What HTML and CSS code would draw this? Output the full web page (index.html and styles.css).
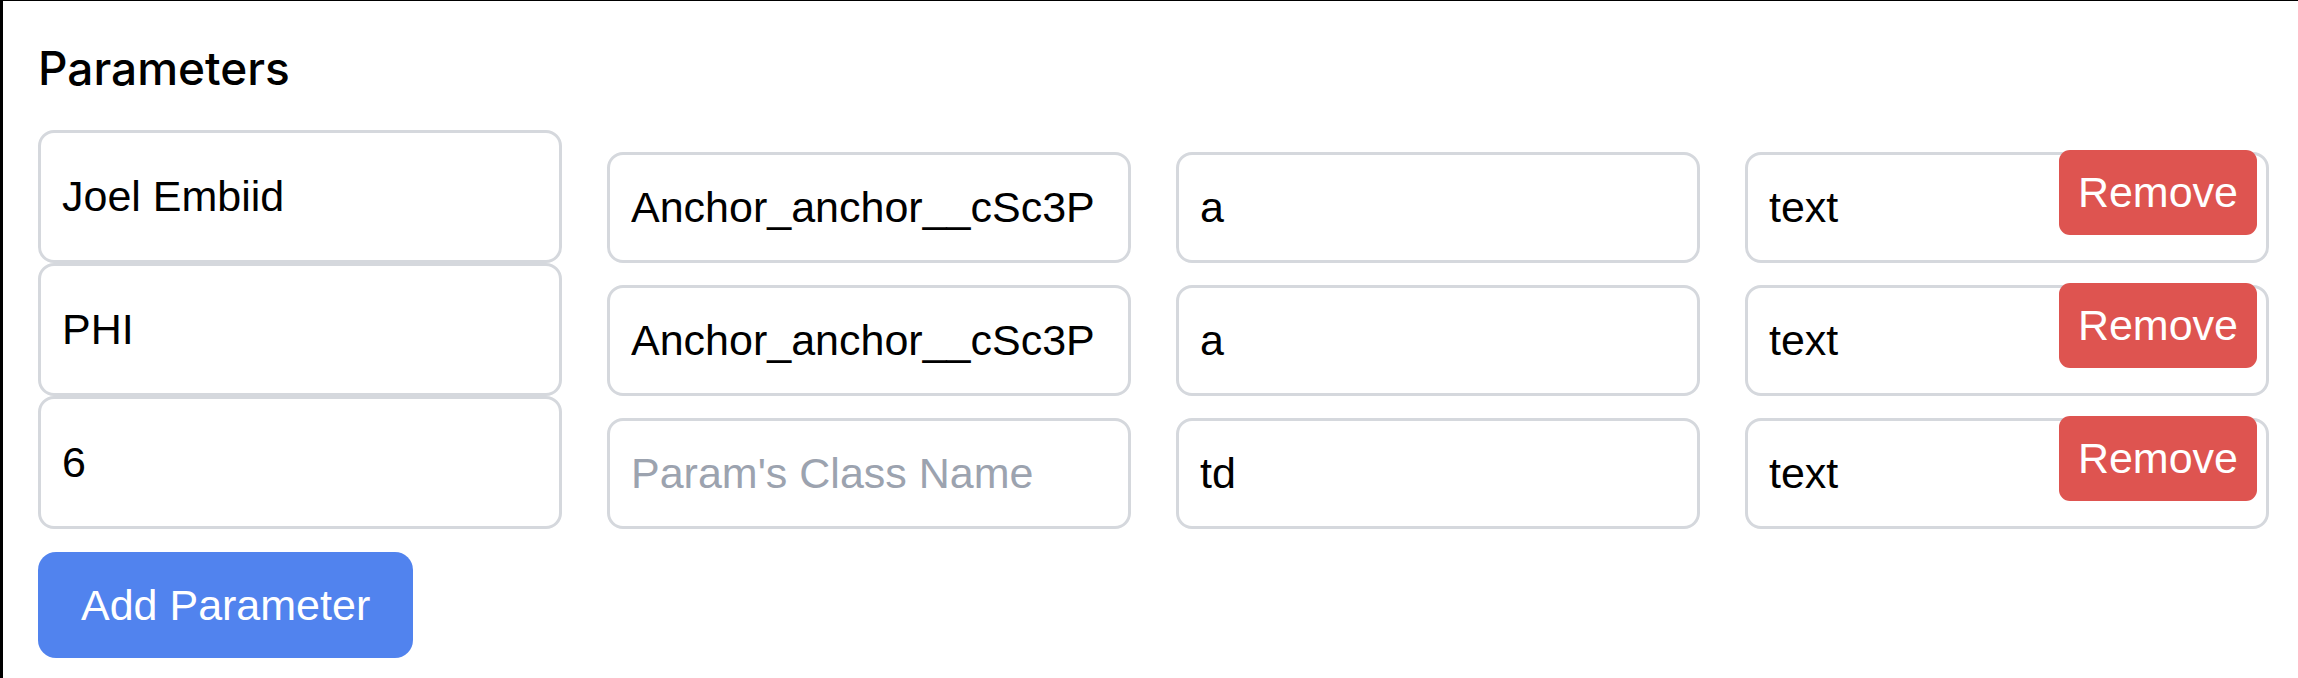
FILE: index.html
```html
<!DOCTYPE html>
<html lang="en">
<head>
<meta charset="utf-8">
<title>Parameters</title>
<link rel="stylesheet" href="styles.css">
</head>
<body>
<main class="panel">
  <h2 class="title">Parameters</h2>
  <div class="params">
    <div class="param-row">
      <input class="field field-name" type="text" value="Joel Embiid">
      <input class="field" type="text" value="Anchor_anchor__cSc3P" placeholder="Param's Class Name">
      <input class="field" type="text" value="a">
      <div class="last-cell">
        <input class="field" type="text" value="text">
        <button class="btn-remove" type="button">Remove</button>
      </div>
    </div>
    <div class="param-row">
      <input class="field field-name" type="text" value="PHI">
      <input class="field" type="text" value="Anchor_anchor__cSc3P" placeholder="Param's Class Name">
      <input class="field" type="text" value="a">
      <div class="last-cell">
        <input class="field" type="text" value="text">
        <button class="btn-remove" type="button">Remove</button>
      </div>
    </div>
    <div class="param-row">
      <input class="field field-name" type="text" value="6">
      <input class="field" type="text" value="" placeholder="Param's Class Name">
      <input class="field" type="text" value="td">
      <div class="last-cell">
        <input class="field" type="text" value="text">
        <button class="btn-remove" type="button">Remove</button>
      </div>
    </div>
  </div>
  <button class="btn-add" type="button">Add Parameter</button>
</main>
</body>
</html>
```

FILE: styles.css
```css
html, body {
  margin: 0;
  padding: 0;
  background: #ffffff;
}

body {
  width: 2298px;
  height: 678px;
  box-sizing: border-box;
  border-left: 3px solid #000000;
  border-top: 1px solid #000000;
  font-family: "Liberation Sans", Arial, sans-serif;
  color: #000000;
  overflow: hidden;
}

.panel {
  padding: 39px 29px 0 35px;
}

.title {
  margin: 0 0 33px 0;
  font-family: Inter, "Liberation Sans", sans-serif;
  font-size: 46px;
  line-height: 57px;
  font-weight: 500;
  letter-spacing: 0;
}

.params {
  display: flex;
  flex-direction: column;
}

.param-row {
  display: grid;
  grid-template-columns: repeat(4, 1fr);
  column-gap: 45px;
  align-items: end;
}

.field {
  display: block;
  width: 100%;
  height: 111px;
  box-sizing: border-box;
  margin: 0;
  padding: 0 21px;
  border: 3px solid #d5d8dd;
  border-radius: 16px;
  background: #ffffff;
  font-family: "Liberation Sans", Arial, sans-serif;
  font-size: 43px;
  color: #000000;
  outline: none;
}

.field::placeholder {
  color: #9ca3af;
}

.field-name {
  height: 133px;
}

.last-cell {
  position: relative;
}

.btn-remove {
  position: absolute;
  top: -2px;
  right: 12px;
  height: 85px;
  margin: 0;
  padding: 0 19px;
  border: none;
  border-radius: 11px;
  background: #de5450;
  color: #ffffff;
  font-family: "Liberation Sans", Arial, sans-serif;
  font-size: 43px;
  line-height: 85px;
  cursor: pointer;
}

.btn-add {
  display: block;
  margin: 23px 0 0 0;
  height: 106px;
  padding: 0 43px;
  border: none;
  border-radius: 18px;
  background: #5183ee;
  color: #ffffff;
  font-family: "Liberation Sans", Arial, sans-serif;
  font-size: 43px;
  cursor: pointer;
}
```
